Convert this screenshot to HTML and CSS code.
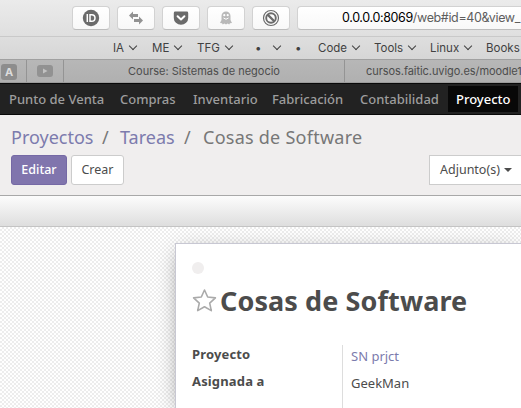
FILE: index.html
```html
<!DOCTYPE html>
<html lang="es">
<head>
<meta charset="utf-8">
<title>Cosas de Software</title>
<link rel="stylesheet" href="styles.css">
</head>
<body>
<header class="browser">
  <div class="toolbar">
    <span class="tool"><svg width="18" height="18" viewBox="0 0 18 18"><circle cx="9" cy="9" r="8.2" fill="#6b6b6b"/><path d="M5.300 5v8M8 5.700H9.700a3.300 3.300 0 0 1 0 6.600H8z" fill="none" stroke="#fff" stroke-width="1.500"/></svg></span>
    <span class="tool"><svg width="16" height="14" viewBox="0 0 16 14"><path d="M1 4.500 5 .5v2.500h5v3H5v2.500zM15 9.500l-4-4v2.500H6v3h5v2.500z" fill="#929292"/></svg></span>
    <span class="tool"><svg width="16" height="16" viewBox="0 0 16 16"><path d="M2.200 1.500h11.600q1.400 0 1.400 1.400v5a7.200 6.900 0 0 1-14.400 0v-5q0-1.400 1.400-1.400z" fill="#6b6b6b"/><path d="m4.600 6.200 3.400 3.200 3.400-3.200" fill="none" stroke="#fff" stroke-width="2" stroke-linecap="round" stroke-linejoin="round"/></svg></span>
    <span class="tool"><svg width="14" height="16" viewBox="0 0 14 16"><path d="M2.500 6a4.500 4.500 0 0 1 9 0v4l1.500 3-2 .2-.8 1.300-1.600-1L7 14.500l-1.600-1-1.600 1-.8-1.300-2-.2 1.500-3z" fill="#b9b9b9"/><circle cx="5.300" cy="5.200" r="1.100" fill="#fff"/><circle cx="8.700" cy="5.200" r="1.100" fill="#fff"/><path d="M4.500 8q2.500 2.500 5 0" stroke="#fff" fill="none"/></svg></span>
    <span class="tool"><svg width="18" height="18" viewBox="0 0 18 18"><circle cx="9" cy="9" r="7.500" fill="none" stroke="#6b6b6b" stroke-width="1.200"/><circle cx="9" cy="9" r="4.800" fill="none" stroke="#6b6b6b" stroke-width="1.900"/><path d="m5.500 5.500 7 7" stroke="#6b6b6b" stroke-width="2.400"/></svg></span>
    <div class="url"><span class="host">0.0.0.0:8069</span><span>/web#id=40&amp;view_</span></div>
  </div>
  <nav class="bookmarks">
    <span class="menu">IA</span><span class="menu">ME</span><span class="menu">TFG</span><span class="menu dots">•</span><span class="menu bullet">•</span><span class="menu">Code</span><span class="menu">Tools</span><span class="menu">Linux</span><span>Books</span>
  </nav>
  <div class="tabs">
    <span class="tab pin"><b class="letter">A</b></span>
    <span class="tab video"><svg width="16" height="12" viewBox="0 0 16 12"><rect width="16" height="12" rx="3" fill="#929292"/><path d="m6 3.500 4.500 2.500L6 8.500z" fill="#c2c2c2"/></svg></span>
    <span class="tab course">Course: Sistemas de negocio</span>
    <span class="tab moodle">cursos.faitic.uvigo.es/moodle1</span>
  </div>
</header>
<nav class="navbar">
  <span>Punto de Venta</span><span>Compras</span><span>Inventario</span><span>Fabricación</span><span>Contabilidad</span><span class="active">Proyecto</span>
</nav>
<section class="panel">
  <div class="crumbs"><a>Proyectos</a><span>/</span><a>Tareas</a><span>/</span><span class="current">Cosas de Software</span></div>
  <div class="actions">
    <span class="btn primary">Editar</span><span class="btn">Crear</span>
    <span class="btn attach">Adjunto(s)<i class="caret"></i></span>
  </div>
</section>
<div class="statusbar"></div>
<main class="content">
  <article class="sheet">
    <div class="state"></div>
    <div class="title">
      <svg class="star" width="25" height="25" viewBox="0 0 25 25"><path d="m12.500 2 3.200 7 7.700.9-5.700 5.200 1.600 7.500-6.800-3.800-6.800 3.800 1.600-7.500-5.700-5.200 7.700-.9z" fill="none" stroke="#aaa" stroke-width="1.600" stroke-linejoin="round"/></svg>
      <h1>Cosas de Software</h1>
    </div>
    <div class="fields">
      <div class="labels"><b>Proyecto</b><b>Asignada a</b></div>
      <div class="values"><a>SN prjct</a><span>GeekMan</span></div>
    </div>
  </article>
</main>
</body>
</html>
```

FILE: styles.css
```css
* { box-sizing: border-box; }
body {
  margin: 0;
  width: 521px;
  height: 408px;
  overflow: hidden;
  display: flex;
  flex-direction: column;
  font: 13px "Noto Sans", sans-serif;
  color: #4c4c4c;
  white-space: nowrap;
}
.browser { font-family: Inter, sans-serif; flex: none; }
.toolbar {
  height: 36px;
  padding: 6px 0 6px 72px;
  display: flex;
  gap: 7px;
  background: linear-gradient(#ebebeb, #dfdfdf);
}
.tool, .url {
  height: 24px;
  background: linear-gradient(#fff, #f8f8f8);
  border: 1px solid #d2d2d2;
  border-bottom-color: #bdbdbd;
  border-radius: 4px;
}
.tool {
  width: 38px;
  flex: none;
  display: flex;
  align-items: center;
  justify-content: center;
}
.url {
  flex: 1;
  padding-left: 44px;
  border-right: 0;
  border-radius: 4px 0 0 4px;
  font-size: 12.5px;
  line-height: 22px;
  letter-spacing: -0.36px;
  color: #5e5e5e;
}
.host { color: #000; }
.bookmarks {
  height: 23px;
  padding-left: 113px;
  display: grid;
  grid-template-columns: 39px 45px 58px 40px 23px 56px 56px 56px 35px;
  border-top: 1px solid #c9c9c9;
  background: linear-gradient(#dedede, #d6d6d6);
  color: #414141;
  font-size: 11.5px;
  line-height: 23px;
}
.menu::after {
  content: "";
  display: inline-block;
  width: 5px;
  height: 5px;
  margin: 0 0 3px 6px;
  border: solid #414141;
  border-width: 0 1.5px 1.5px 0;
  transform: rotate(45deg);
}
.dots::after { margin-left: 13px; }
.bullet::after { display: none; }
.tabs {
  height: 24px;
  display: grid;
  grid-template-columns: 27px 37px 281px 176px;
  border-top: 1px solid #a0a0a0;
  background: linear-gradient(#b7b7b7, #b0b0b0);
  border-bottom: 1px solid #9b9b9b;
  font-size: 11px;
  line-height: 22px;
  color: #4c4c4c;
}
.tab { border-right: 1px solid #949494; }
.pin { padding: 4px 0 0 1px; }
.letter {
  display: block;
  width: 16px;
  height: 16px;
  border-radius: 3px;
  background: #8d8d8d;
  color: #ddd;
  line-height: 16px;
  text-align: center;
}
.video { display: flex; align-items: center; justify-content: center; }
.course { padding-left: 64px; }
.moodle { padding-left: 21px; border: 0; letter-spacing: -0.06px; }
.navbar {
  height: 32px;
  flex: none;
  padding: 2px 0 2px 9px;
  display: grid;
  grid-template-columns: 111px 73px 79px 88px 88px 70px;
  background: #222;
  border: solid #080808;
  border-width: 1px 0;
  color: #9d9d9d;
  font-size: 13px;
  line-height: 26px;
  font-weight: 500;
}
.active { background: #080808; color: #fff; padding-left: 8px; }
.panel { height: 80px; flex: none; padding: 10px 0 0 11px; background: #f0eeee; }
.crumbs {
  height: 25px;
  display: grid;
  grid-template-columns: 91px 18px 64px 19px 200px;
  font-size: 18px;
  line-height: 25px;
  color: #777;
}
.current { letter-spacing: 0.25px; }
a { color: #7c7bad; }
.actions { display: flex; gap: 4px; margin-top: 5px; }
.btn {
  height: 30px;
  width: 53px;
  border: 1px solid #ccc;
  border-radius: 3px;
  background: #fff;
  line-height: 28px;
  text-align: center;
  font-size: 12.5px;
}
.primary { width: 56px; background: #8075ad; border-color: #7569a5; color: #fff; font-weight: 500; }
.attach { width: 92px; margin-left: auto; border-radius: 0; border-right: 0; text-align: left; padding-left: 10px; }
.caret {
  display: inline-block;
  margin: 0 0 2px 4px;
  border: 4px solid transparent;
  border-top-color: #4c4c4c;
  border-bottom: 0;
}
.statusbar {
  height: 32px;
  flex: none;
  border-top: 1px solid #a8a8a8;
  border-bottom: 1px solid #c4c4c4;
  background: linear-gradient(#fcfcfc, #dedede);
}
.content {
  flex: 1;
  min-height: 0;
  display: flex;
  padding: 16px 0 0 175px;
  background: conic-gradient(#ededed 25%, #fff 0 50%, #ededed 0 75%, #fff 0) 0 0 / 4px 4px;
}
.sheet {
  flex: 1;
  padding: 18px 0 0 16px;
  background: #fff;
  border: solid #c8c8d3;
  border-width: 1px 0 0 1px;
  box-shadow: 0 5px 20px -5px rgba(0, 0, 0, .45);
}
.state { width: 12px; height: 12px; border-radius: 50%; background: #f0eeee; }
.title { display: flex; height: 40px; margin-top: 7px; align-items: center; }
.star { margin: 0 3px 2px 0; flex: none; }
h1 { margin: 0; font-size: 27px; line-height: 40px; font-weight: 700; letter-spacing: 0.1px; }
.fields { display: flex; margin-top: 24px; }
.labels { width: 151px; height: 63px; border-right: 1px solid #ddd; letter-spacing: 0.15px; }
.labels b, .values a, .values span { display: block; height: 27px; line-height: 18px; }
.values { padding: 2px 0 0 8px; }
```
